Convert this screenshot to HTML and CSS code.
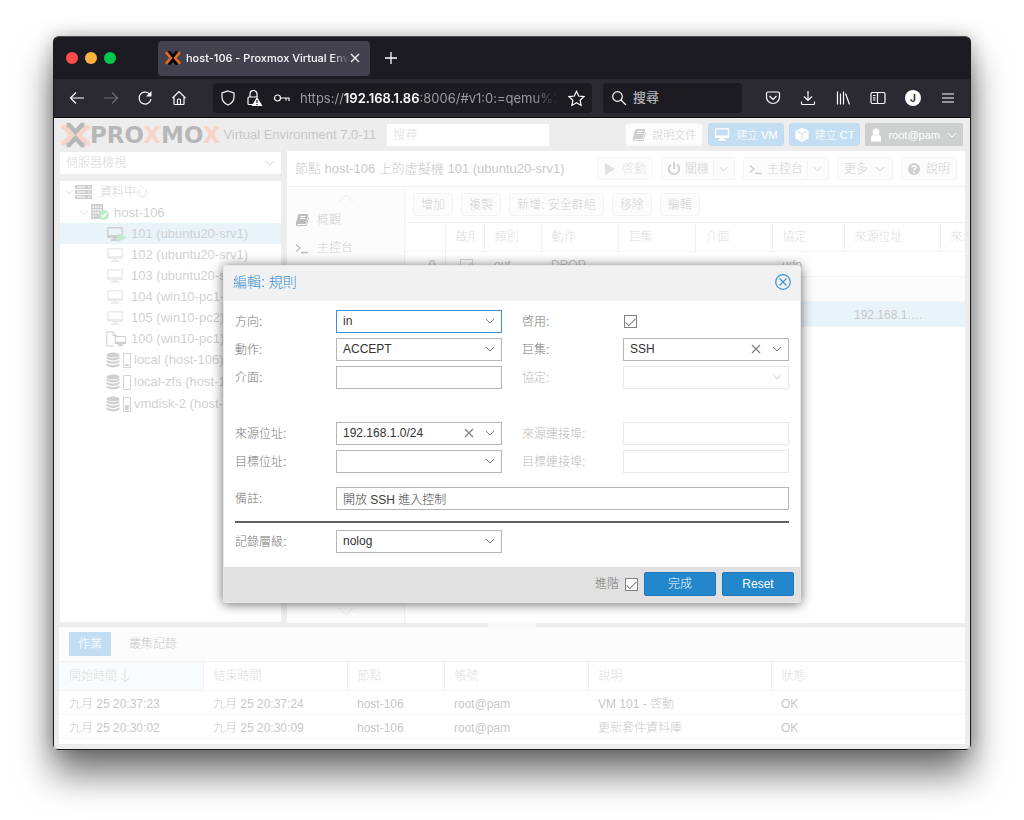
FILE: index.html
```html
<!DOCTYPE html>
<html lang="zh-Hant">

<head>
    <meta charset="UTF-8">
    <meta name="viewport" content="width=device-width, initial-scale=1.0">
    <title>host-106 - Proxmox Virtual Environment</title>
    <link rel="stylesheet" href="styles.css">
</head>

<body>
    <!-- shared icons -->
    <svg class="sprite" aria-hidden="true">
        <symbol id="chevron" viewBox="0 0 12 12"><path d="M2 4l4 4 4-4" fill="none" stroke="currentColor" /></symbol>
        <symbol id="cross" viewBox="0 0 12 12"><path d="M2 2l8 8M10 2l-8 8" fill="none" stroke="currentColor" stroke-width="1.2" /></symbol>
        <symbol id="monitor" viewBox="0 0 18 16"><path fill="currentColor" fill-rule="evenodd" d="M2 1h14q1 0 1 1v9q0 1-1 1h-5v1h2v2H5v-2h2v-1H2q-1 0-1-1V2q0-1 1-1zm.5 1.500v6.500h13V2.500z" /></symbol>
        <symbol id="book" viewBox="0 0 14 14"><path fill="currentColor" d="M4.500 1H12q1.300.2 1 1.500l-2 7.500q-.3 1-1.300 1H3q-1 .2-.8 1H11L13.300 4q.8.5.5 1.500l-2 6.500q-.3 1-1.300 1H2.500Q.3 12.500.8 10.500L3 2.200Q3.400 1 4.500 1z" /><path d="M5.500 3.500h5M5 5.500h5" stroke="#fff" /></symbol>
        <symbol id="terminal" viewBox="0 0 14 14"><path d="M1 3.500l4 3.500-4 3.500M6 11.500h7" fill="none" stroke="currentColor" stroke-width="1.400" /></symbol>
        <symbol id="disk" viewBox="0 0 14 16"><g fill="currentColor"><ellipse cx="7" cy="3" rx="6.500" ry="2.500" /><path d="M.5 4.500q6.500 3.500 13 0v2q-6.500 4-13 0zM.5 8q6.500 3.500 13 0v2q-6.500 4-13 0zM.5 11.500q6.500 3.500 13 0v2q-6.500 4-13 0z" /></g></symbol>
    </svg>

    <div class="window">
        <div class="tabstrip">
            <span class="light red"></span><span class="light yellow"></span><span class="light green"></span>
            <div class="tab">
                <svg width="16" height="14" viewBox="0 0 16 14" fill="none" stroke-width="2.600"><path d="M.5 2h1L6 7l-4.500 5h-1M15.500 2h-1L10 7l4.500 5h1" stroke="#f06a1b" /><path d="M3.500 1h1L8 5.500 11.500 1h1M3.500 13h1L8 8.500l3.500 4.500h1" stroke="#000" /></svg>
                <span class="tab-title">host-106 - Proxmox Virtual Envi</span>
                <button class="tab-close" aria-label="Close tab"><svg width="12" height="12"><use href="#cross" /></svg></button>
            </div>
            <button class="tab-new" aria-label="New tab"><svg width="14" height="14" viewBox="0 0 14 14"><path d="M7 1v12M1 7h12" stroke="currentColor" stroke-width="1.300" /></svg></button>
        </div>

        <div class="navbar">
            <div class="nav-group">
                <button aria-label="Back"><svg width="16" height="16" viewBox="0 0 16 16"><path d="M15 8H2M7 2.500L1.500 8 7 13.500" /></svg></button>
                <button class="dim" aria-label="Forward"><svg width="16" height="16" viewBox="0 0 16 16"><path d="M1 8h13M9 2.500L14.500 8 9 13.500" /></svg></button>
                <button aria-label="Reload"><svg width="16" height="16" viewBox="0 0 16 16"><path d="M14 9a6 6 0 1 1-2-5.500L14 5" /><path d="M14.500 1v5.500H9z" fill="currentColor" stroke="none" /></svg></button>
                <button aria-label="Home"><svg width="16" height="16" viewBox="0 0 16 16"><path d="M1.500 8L8 1.500 14.500 8M3 7v6.500q0 1 1 1h8q1 0 1-1V7M6.500 14v-4q0-1 1-1h1q1 0 1 1v4" /></svg></button>
            </div>
            <div class="urlbar">
                <svg width="16" height="16" viewBox="0 0 16 16"><path d="M8 1l6 2v4q0 5.500-6 8-6-2.500-6-8V3z" /></svg>
                <svg width="17" height="16" viewBox="0 0 17 16"><path d="M4 7V4a3 3 0 0 1 7 0v3M7 14.500H3q-1 0-1-1V8q0-1 1-1h9" /><path d="M11 7l5.500 9h-11z" fill="#fff" stroke="none" /><path d="M11 10v3M11 14v1" stroke="#1c1b22" /></svg>
                <svg width="17" height="16" viewBox="0 0 17 16"><circle cx="4.500" cy="8" r="3" /><path d="M7.500 8H16v3M13 8v2.500" /></svg>
                <span class="url">https://<b>192.168.1.86</b>:8006/#v1:0:=qemu%2</span>
                <svg width="17" height="17" viewBox="0 0 17 17"><path d="M8.500 1.300l2.200 4.700 5.200.6-3.800 3.600 1 5.200-4.600-2.600-4.600 2.600 1-5.200L1.100 6.600 6.300 6z" /></svg>
            </div>
            <div class="searchbar">
                <svg width="16" height="16" viewBox="0 0 16 16"><circle cx="6.500" cy="6.500" r="4.800" /><path d="M10 10l5 5" /></svg>
                <input type="text" placeholder="搜尋" aria-label="搜尋">
            </div>
            <div class="nav-group end">
                <button aria-label="Pocket"><svg width="16" height="16" viewBox="0 0 16 16"><path d="M3 2h10q1.500 0 1.500 1.500V7a6.500 6.500 0 0 1-13 0V3.500Q1.500 2 3 2zM4.500 6L8 9.500 11.500 6" /></svg></button>
                <button aria-label="Downloads"><svg width="16" height="16" viewBox="0 0 16 16"><path d="M8 1v9M4 6.500l4 4 4-4M1.500 11.500v2q0 1 1 1h11q1 0 1-1v-2" /></svg></button>
                <button aria-label="Library"><svg width="16" height="16" viewBox="0 0 16 16"><path d="M2.500 1.500v13M5.500 3.500v11M8.500 1.500v13M10.500 3.500l4 11" /></svg></button>
                <button aria-label="Sidebars"><svg width="16" height="16" viewBox="0 0 16 16"><rect x="1" y="2.500" width="14" height="11" rx="1.500" /><path d="M7.500 2.500v11M3 5.500h2.500M3 7.800h2.500M3 10h2.500" /></svg></button>
                <button aria-label="Account"><span class="avatar">J</span></button>
                <button aria-label="Menu"><svg width="14" height="14" viewBox="0 0 14 14"><path d="M1 3h12M1 7h12M1 11h12" /></svg></button>
            </div>
        </div>

        <div class="page">
            <header class="header">
                <svg width="29" height="26" viewBox="0 0 29 26" fill="none" stroke-width="4.500"><path d="M.5 5H3l8 8-8 8H.5M28.500 5H26l-8 8 8 8h2.500" stroke="#e57045" /><path d="M5.500 3h2.500l6.500 7L21 3h2.500M5.500 23h2.500l6.500-7 6.500 7h2.500" stroke="#101010" /></svg>
                <span class="brand">PRO<i>X</i>MO<i>X</i></span>
                <span class="version">Virtual Environment 7.0-11</span>
                <input class="search" type="text" placeholder="搜尋" aria-label="搜尋">
                <div class="header-buttons">
                    <button class="btn"><svg width="14" height="14"><use href="#book" /></svg>說明文件</button>
                    <button class="btn blue"><svg width="16" height="15"><use href="#monitor" /></svg>建立 VM</button>
                    <button class="btn blue"><svg width="14" height="14" viewBox="0 0 14 14"><path fill="currentColor" d="M7 0l6.500 2.500v8L7 14 .5 10.500v-8z" /><path d="M2 3.500l5 2 5-2M7 6v6.500" fill="none" stroke="#3892d4" /></svg>建立 CT</button>
                    <button class="btn user"><svg width="12" height="14" viewBox="0 0 12 14" fill="currentColor"><circle cx="6" cy="4" r="3.500" /><path d="M1 13.500V10q0-3 2.500-3 2.500 1.500 5 0Q11 7 11 10v3.500z" /></svg>root@pam<svg width="12" height="12"><use href="#chevron" /></svg></button>
                </div>
            </header>

            <div class="main">
                <aside class="resources">
                    <button class="view-select">伺服器檢視<svg width="12" height="12"><use href="#chevron" /></svg></button>
                    <ul class="tree">
                        <li class="level0"><svg class="arrow" width="12" height="12"><use href="#chevron" /></svg><svg width="17" height="14" viewBox="0 0 17 14"><path fill="currentColor" d="M0 0h17v4H0zM0 5h17v4H0zM0 10h17v4H0z" /><path d="M2 2h8M2 7h8M2 12h8M13 2h2M13 7h2M13 12h2" stroke="#fff" /></svg><span>資料中心</span></li>
                        <li class="level1"><svg class="arrow" width="12" height="12"><use href="#chevron" /></svg><svg width="20" height="17" viewBox="0 0 20 17"><path fill="currentColor" d="M1 0h12v15H1z" /><path d="M2.500 3h9M2.500 6h9M2.500 9h9M2.500 12h3" stroke="#fff" stroke-width="1.500" stroke-dasharray="1.500 1" /><circle cx="14" cy="11" r="5" fill="#21bf4b" /><path d="M11.500 11l2 2 3-4" stroke="#fff" stroke-width="1.500" fill="none" /></svg><span>host-106</span></li>
                        <li class="level2 selected"><svg width="21" height="16" viewBox="0 0 21 16"><use href="#monitor" width="18" height="16" /><path d="M12 7l9 4.500-9 4.500z" fill="#21bf4b" /></svg><span>101 (ubuntu20-srv1)</span></li>
                        <li class="level2"><svg class="off" width="18" height="16"><use href="#monitor" /></svg><span>102 (ubuntu20-srv1)</span></li>
                        <li class="level2"><svg class="off" width="18" height="16"><use href="#monitor" /></svg><span>103 (ubuntu20-srv1)</span></li>
                        <li class="level2"><svg class="off" width="18" height="16"><use href="#monitor" /></svg><span>104 (win10-pc1-old)</span></li>
                        <li class="level2"><svg class="off" width="18" height="16"><use href="#monitor" /></svg><span>105 (win10-pc2)</span></li>
                        <li class="level2"><svg width="21" height="16" viewBox="0 0 21 16"><path d="M8 15H.8V.8H7L10.500 4v2M7 1v3.500h3.500" fill="none" stroke="currentColor" /><use href="#monitor" x="8" y="4" width="13" height="12" /></svg><span>100 (win10-pc1)</span></li>
                        <li class="level2 storage"><svg width="14" height="16"><use href="#disk" /></svg><i class="gauge" style="--fill: 2px"></i><span>local (host-106)</span></li>
                        <li class="level2 storage"><svg width="14" height="16"><use href="#disk" /></svg><i class="gauge" style="--fill: 0px"></i><span>local-zfs (host-106)</span></li>
                        <li class="level2 storage"><svg width="14" height="16"><use href="#disk" /></svg><i class="gauge" style="--fill: 5px"></i><span>vmdisk-2 (host-106)</span></li>
                    </ul>
                </aside>

                <section class="content">
                    <div class="content-title">
                        <h1>節點 host-106 上的虛擬機 101 (ubuntu20-srv1)</h1>
                        <div class="title-buttons">
                            <button class="btn" disabled><svg width="12" height="12" viewBox="0 0 12 12"><path d="M1 0l10 6-10 6z" fill="currentColor" /></svg>啓動</button>
                            <button class="btn split"><svg width="14" height="14" viewBox="0 0 14 14"><path d="M4 2.500a5.300 5.300 0 1 0 6 0M7 0v7" fill="none" stroke="currentColor" stroke-width="1.800" /></svg>關機<svg class="more" width="12" height="12"><use href="#chevron" /></svg></button>
                            <button class="btn split"><svg width="14" height="14"><use href="#terminal" /></svg>主控台<svg class="more" width="12" height="12"><use href="#chevron" /></svg></button>
                            <button class="btn">更多<svg width="12" height="12"><use href="#chevron" /></svg></button>
                            <button class="btn"><svg width="12" height="12" viewBox="0 0 12 12"><circle cx="6" cy="6" r="6" fill="currentColor" /><path d="M4 4.500Q4 3 6 3t2 1.500Q8 5.500 6 6.500V7.500M6 8.500V10" fill="none" stroke="#fff" stroke-width="1.500" /></svg>說明</button>
                        </div>
                    </div>
                    <div class="content-body">
                        <nav class="sidenav">
                            <svg class="scroll" width="16" height="9" viewBox="0 0 16 9"><path d="M1 8l7-7 7 7" /></svg>
                            <a href="#"><svg width="14" height="14"><use href="#book" /></svg>概觀</a>
                            <a href="#"><svg width="14" height="14"><use href="#terminal" /></svg>主控台</a>
                            <svg class="scroll bottom" width="16" height="9" viewBox="0 0 16 9"><path d="M1 1l7 7 7-7" /></svg>
                        </nav>
                        <div class="firewall">
                            <div class="toolbar">
                                <button class="btn">增加</button>
                                <button class="btn">複製</button>
                                <button class="btn">新增: 安全群組</button>
                                <button class="btn">移除</button>
                                <button class="btn">編輯</button>
                            </div>
                            <table class="rules">
                                <colgroup>
                                    <col class="w-num"><col class="w-on"><col class="w-type"><col class="w-mid"><col class="w-mid"><col class="w-mid"><col class="w-proto"><col class="w-src"><col>
                                </colgroup>
                                <thead>
                                    <tr><th></th><th><div class="clip">啟用</div></th><th>類別</th><th>動作</th><th>巨集</th><th>介面</th><th>協定</th><th>來源位址</th><th>來源連接埠</th></tr>
                                </thead>
                                <tbody>
                                    <tr><td class="num">0</td><td><input type="checkbox" checked aria-label="啟用"></td><td>out</td><td>DROP</td><td></td><td></td><td>udp</td><td></td><td></td></tr>
                                    <tr class="alt"><td colspan="9"></td></tr>
                                    <tr class="selected"><td></td><td></td><td></td><td></td><td></td><td></td><td></td><td>192.168.1.…</td><td></td></tr>
                                </tbody>
                            </table>
                        </div>
                    </div>
                </section>
            </div>

            <div class="splitter"><span></span></div>

            <section class="logs">
                <div class="log-tabs">
                    <button class="active">作業</button>
                    <button>叢集記錄</button>
                </div>
                <table>
                    <colgroup>
                        <col class="w-time"><col class="w-time"><col class="w-node"><col class="w-time"><col class="w-desc"><col>
                    </colgroup>
                    <thead>
                        <tr>
                            <th class="sorted">開始時間<svg width="10" height="14" viewBox="0 0 10 14"><path d="M5 0v13M1 9l4 4 4-4" fill="none" stroke="currentColor" /></svg></th>
                            <th>結束時間</th><th>節點</th><th>帳號</th><th>說明</th><th>狀態</th>
                        </tr>
                    </thead>
                    <tbody>
                        <tr><td>九月 25 20:37:23</td><td>九月 25 20:37:24</td><td>host-106</td><td>root@pam</td><td>VM 101 - 啓動</td><td>OK</td></tr>
                        <tr><td>九月 25 20:30:02</td><td>九月 25 20:30:09</td><td>host-106</td><td>root@pam</td><td>更新套件資料庫</td><td>OK</td></tr>
                    </tbody>
                </table>
            </section>

            <div class="mask">
                <form class="dialog">
                    <div class="dialog-header">
                        <h2>編輯: 規則</h2>
                        <button type="button" aria-label="Close"><svg width="16" height="16" viewBox="0 0 16 16"><path d="M8 .7a7.300 7.300 0 1 0 0 14.600A7.300 7.300 0 1 0 8 .7zM4.500 4.500l7 7M11.500 4.500l-7 7" fill="none" stroke="currentColor" stroke-width="1.200" /></svg></button>
                    </div>
                    <div class="dialog-body">
                        <div class="fields">
                            <label for="direction">方向:</label>
                            <div class="combo focus"><select id="direction"><option>in</option></select><svg width="12" height="12"><use href="#chevron" /></svg></div>
                            <label for="enable">啓用:</label>
                            <input type="checkbox" id="enable" checked>

                            <label for="action">動作:</label>
                            <div class="combo"><select id="action"><option>ACCEPT</option></select><svg width="12" height="12"><use href="#chevron" /></svg></div>
                            <label for="macro">巨集:</label>
                            <div class="combo"><select id="macro"><option>SSH</option></select><svg width="12" height="12"><use href="#cross" /></svg><svg width="12" height="12"><use href="#chevron" /></svg></div>

                            <label for="iface">介面:</label>
                            <input type="text" id="iface">
                            <label class="off" for="proto">協定:</label>
                            <div class="combo off"><select id="proto" disabled><option></option></select><svg width="12" height="12"><use href="#chevron" /></svg></div>
                        </div>
                        <div class="fields address">
                            <label for="source">來源位址:</label>
                            <div class="combo"><select id="source"><option>192.168.1.0/24</option></select><svg width="12" height="12"><use href="#cross" /></svg><svg width="12" height="12"><use href="#chevron" /></svg></div>
                            <label class="off" for="sport">來源連接埠:</label>
                            <input type="text" id="sport" disabled>

                            <label for="dest">目標位址:</label>
                            <div class="combo"><select id="dest"><option></option></select><svg width="12" height="12"><use href="#chevron" /></svg></div>
                            <label class="off" for="dport">目標連接埠:</label>
                            <input type="text" id="dport" disabled>
                        </div>
                        <div class="fields comment">
                            <label for="comment">備註:</label>
                            <input type="text" id="comment" class="wide" value="開放 SSH 進入控制">
                        </div>
                        <hr>
                        <div class="fields">
                            <label for="loglevel">記錄層級:</label>
                            <div class="combo"><select id="loglevel"><option>nolog</option></select><svg width="12" height="12"><use href="#chevron" /></svg></div>
                        </div>
                    </div>
                    <div class="dialog-footer">
                        <label for="advanced">進階</label>
                        <input type="checkbox" id="advanced" checked>
                        <button type="submit">完成</button>
                        <button type="reset">Reset</button>
                    </div>
                </form>
            </div>
        </div>
    </div>
</body>

</html>
```
FILE: styles.css
```css
* {
    box-sizing: border-box;
}

body {
    margin: 0;
    min-height: 100vh;
    padding: 36px 53px 70px;
    background: #fff;
    color: #404040;
    font: 300 12px/16px "Liberation Sans", "Noto Sans CJK TC", sans-serif;
    display: flex;
    overflow: hidden;
}

button,
input,
select {
    font: inherit;
    color: inherit;
    margin: 0;
}

button {
    display: flex;
    align-items: center;
    justify-content: center;
    padding: 0;
    border: 0;
    background: none;
    white-space: nowrap;
}

svg {
    flex: none;
    display: block;
}

.sprite {
    position: absolute;
    width: 0;
    height: 0;
}

/* browser window */
.window {
    flex: 1;
    min-width: 0;
    display: flex;
    flex-direction: column;
    border: 1px solid #1a1a1a;
    border-top-color: #4c4e4e;
    border-radius: 6px;
    background: #1c1b22;
    box-shadow: 0 24px 36px rgba(0, 0, 0, 0.55), 0 0 18px rgba(0, 0, 0, 0.25);
}

.tabstrip {
    display: flex;
    align-items: center;
    height: 42px;
    padding-left: 12px;
    color: #fbfbfe;
}

.light {
    width: 12px;
    height: 12px;
    margin-right: 7px;
    border-radius: 50%;
}

.red {
    background: #ff4b4b;
}

.yellow {
    background: #ffb23e;
}

.green {
    background: #00ca4e;
}

.tab {
    display: flex;
    align-items: center;
    width: 212px;
    height: 35px;
    margin-left: 35px;
    padding: 0 9px 0 7px;
    border-radius: 4px;
    background: #42414d;
}

.tab-title {
    flex: 1;
    margin-left: 5px;
    overflow: hidden;
    white-space: nowrap;
    font: 500 11px/16px Inter, sans-serif;
    -webkit-mask-image: linear-gradient(90deg, #000 145px, transparent);
    mask-image: linear-gradient(90deg, #000 145px, transparent);
}

.tab-new {
    margin-left: 14px;
}

.navbar {
    display: flex;
    align-items: center;
    height: 39px;
    padding: 0 5px 0 6px;
    border-bottom: 1px solid #0c0c0d;
    background: #2b2a33;
    color: #fbfbfe;
}

.navbar svg {
    fill: none;
    stroke: currentColor;
    stroke-width: 1.2;
}

.nav-group {
    display: flex;
    margin-right: 17px;
}

.nav-group button {
    width: 34px;
    height: 32px;
}

.nav-group.end {
    gap: 1px;
    margin: 0 0 0 14px;
}

.nav-group .dim {
    color: #6d6c75;
}

.urlbar,
.searchbar {
    display: flex;
    align-items: center;
    height: 30px;
    border-radius: 4px;
    background: #1c1b22;
}

.urlbar {
    flex: 1;
    min-width: 0;
    gap: 10px;
    padding: 0 7px;
}

.url {
    flex: 1;
    overflow: hidden;
    white-space: nowrap;
    color: #9b9aa2;
    font: 400 13px/18px Inter, sans-serif;
    -webkit-mask-image: linear-gradient(90deg, #000 90%, transparent);
    mask-image: linear-gradient(90deg, #000 90%, transparent);
}

.url b {
    color: #fbfbfe;
    font-weight: 600;
}

.searchbar {
    width: 139px;
    margin-left: 11px;
    padding: 0 8px;
    gap: 6px;
}

.searchbar input {
    flex: 1;
    min-width: 0;
    border: 0;
    padding: 0;
    background: none;
    font-size: 13px;
    font-weight: 500;
}

.searchbar input::placeholder {
    color: #b5b4bb;
}

.avatar {
    width: 16px;
    height: 16px;
    border-radius: 50%;
    background: #fff;
    color: #2b2a33;
    font: 700 10px/16px Inter, sans-serif;
}

/* proxmox page */
.page {
    position: relative;
    flex: 1;
    display: flex;
    flex-direction: column;
    padding: 0 5px 5px;
    border-radius: 0 0 5px 5px;
    background: #c3c3c3;
}

.header {
    display: flex;
    align-items: center;
    height: 33px;
    padding: 0 2px;
}

.brand {
    font: 700 23px/26px "DejaVu Sans", sans-serif;
    color: #101010;
}

.brand i {
    color: #e57045;
    font-style: normal;
}

.version {
    margin-left: 3px;
    font-size: 13px;
    white-space: nowrap;
}

.search {
    width: 162px;
    height: 22px;
    margin-left: 11px;
    padding: 0 6px;
    border: 0;
    background: #fff;
}

.search::placeholder {
    color: #909090;
}

.header-buttons {
    display: flex;
    gap: 5px;
    margin-left: auto;
    font-size: 11px;
}

.btn {
    height: 23px;
    gap: 6px;
    padding: 0 7px;
    border: 1px solid #d8d8d8;
    border-radius: 3px;
    background: #f5f5f5;
    color: #606060;
}

.header .btn {
    padding: 0 6px;
}

.header .btn.blue {
    border-color: #2c83c4;
    background: #3892d4;
    color: #fff;
    padding: 0 5px;
}

.header .btn.user {
    border-radius: 1px;
    border-color: #5d6363;
    background: #5d6363;
    color: #fff;
    padding: 0 4px;
}

.btn:disabled {
    color: #999;
    border-color: #e4e4e4;
}

.btn .more {
    width: 16px;
    height: 18px;
    padding-left: 4px;
    border-left: 1px solid #d8d8d8;
}

.main {
    flex: 1;
    display: flex;
    gap: 6px;
    min-height: 0;
}

.resources {
    display: flex;
    flex-direction: column;
    gap: 7px;
    width: 222px;
    padding: 1px 0 1px 1px;
}

.view-select {
    justify-content: space-between;
    height: 22px;
    padding: 0 5px 0 6px;
    background: #fff;
    color: #707070;
}

.tree {
    flex: 1;
    margin: 0;
    padding: 0;
    list-style: none;
    overflow: hidden;
    background: #fff;
    font-size: 13px;
}

.tree li {
    display: flex;
    align-items: center;
    height: 21px;
    color: #606060;
    white-space: nowrap;
}

.tree .level0 {
    font-size: 12px;
}

.tree .level0 svg + svg {
    margin-right: 8px;
}

.tree .arrow {
    color: #999;
    margin: 0 0 0 3px;
}

.tree .level1 {
    padding-left: 15px;
}

.tree .level1 span {
    margin-left: 4px;
}

.tree .level2 {
    padding-left: 46px;
}

.tree .level2 svg {
    margin-right: 7px;
}

.tree .level2 svg[width="21"] {
    margin-right: 4px;
}

.tree .level2 .off {
    color: #bbb;
}

.tree .storage {
    height: 22px;
}

.tree .storage svg {
    margin-right: 3px;
}

.gauge {
    width: 8px;
    height: 15px;
    margin-right: 3px;
    padding: 1px;
    border: 1px solid #707070;
    background: linear-gradient(#707070, #707070) center bottom / 4px var(--fill) no-repeat content-box;
}

.tree .selected,
.rules .selected {
    background: #b5d8ee;
}

.content {
    flex: 1;
    min-width: 0;
    display: flex;
    flex-direction: column;
    background: #fff;
}

.content-title {
    display: flex;
    align-items: center;
    justify-content: space-between;
    height: 36px;
    padding: 0 8px;
    border-bottom: 1px solid #d0d0d0;
}

h1,
h2 {
    margin: 0;
    font-size: 13px;
    font-weight: 300;
    white-space: nowrap;
}

.title-buttons,
.toolbar {
    display: flex;
    gap: 8px;
}

.title-buttons .btn {
    padding: 0 6px;
}

.title-buttons .split {
    gap: 4px;
    padding: 0 5px;
}

.content-body {
    flex: 1;
    display: flex;
}

.sidenav {
    display: flex;
    flex-direction: column;
    width: 118px;
    padding: 7px 8px;
    border-right: 1px solid #d0d0d0;
    background: #f5f5f5;
}

.sidenav a {
    display: flex;
    align-items: center;
    gap: 8px;
    height: 28px;
    color: #606060;
    text-decoration: none;
}

.sidenav a svg {
    color: #222;
}

.scroll {
    align-self: center;
    margin-bottom: 3px;
    fill: none;
    stroke: #bbb;
}

.scroll.bottom {
    margin: auto 0 0;
}

.firewall {
    flex: 1;
    min-width: 0;
}

.toolbar {
    height: 35px;
    align-items: center;
    padding: 0 8px;
}

table {
    width: 100%;
    table-layout: fixed;
    border-collapse: collapse;
}

th,
td {
    height: 24px;
    padding: 2px 9px 0;
    border-bottom: 1px solid #ddd;
    text-align: left;
    font-weight: 300;
    white-space: nowrap;
    overflow: hidden;
}

th {
    height: 29px;
    padding-top: 0;
    border-top: 1px solid #d0d0d0;
    border-left: 1px solid #d0d0d0;
    color: #888;
}

th:first-child {
    border-left: 0;
}

.rules th,
.rules td {
    padding-left: 10px;
}

.rules td {
    height: 25px;
}

.rules .num {
    text-align: right;
    border-right: 1px solid #d0d0d0;
}

.rules input {
    display: block;
    margin-left: 4px;
}

.clip {
    width: 18px;
    overflow: hidden;
}

.alt {
    background: #f5f5f5;
}

.w-num {
    width: 40px;
}

.w-on {
    width: 39px;
}

.w-type {
    width: 57px;
}

.w-mid {
    width: 77px;
}

.w-proto {
    width: 72px;
}

.w-src {
    width: 96px;
}

.splitter {
    height: 4px;
}

.splitter span {
    display: block;
    width: 48px;
    height: 4px;
    margin: 0 auto;
    background: #e8e8e8;
}

.logs {
    height: 117px;
    background: #fff;
    overflow: hidden;
}

.log-tabs {
    display: flex;
    gap: 18px;
    height: 34px;
    padding: 5px 10px;
    background: #f5f5f5;
}

.log-tabs button {
    height: 24px;
    padding: 0;
}

.log-tabs .active {
    padding: 0 9px;
    border-radius: 1px;
    background: #3892d4;
    color: #fff;
}

.logs th,
.logs td {
    padding-left: 10px;
}

.sorted {
    background: #ebf6fe;
}

.sorted svg {
    display: inline-block;
    margin-left: 3px;
    vertical-align: -3px;
}

.w-time {
    width: 144px;
}

.w-node {
    width: 97px;
}

.w-desc {
    width: 183px;
}

/* dialog */
.mask {
    position: absolute;
    inset: 0;
    display: flex;
    align-items: center;
    justify-content: center;
    overflow: hidden;
    background: rgba(255, 255, 255, 0.7);
}

.dialog {
    width: 578px;
    border: 1px solid #e8e8e8;
    border-radius: 3px;
    background: #fff;
    box-shadow: 0 1px 12px rgba(0, 0, 0, 0.6);
}

.dialog-header {
    display: flex;
    align-items: center;
    justify-content: space-between;
    height: 35px;
    padding: 0 9px 2px;
    background: #f1f1f1;
    color: #3892d4;
}

h2 {
    font-size: 14px;
}

.dialog-body {
    padding: 9px 11px 14px;
}

.fields {
    display: grid;
    grid-template-columns: 101px 1fr 121px 1fr;
    row-gap: 5px;
    align-items: center;
}

.fields > label {
    padding-top: 2px;
}

.fields > label:nth-of-type(even) {
    padding-left: 20px;
}

.fields.address {
    margin-top: 33px;
}

.fields.comment {
    margin-top: 14px;
}

label {
    color: #777;
}

label.off {
    color: #bbb;
}

.fields input[type="text"],
.combo {
    width: 100%;
    height: 23px;
    border: 1px solid #b5b5b5;
    background: #fff;
}

.fields input[type="text"] {
    padding: 0 6px;
}

.fields input.wide {
    grid-column: 2 / 5;
}

.fields input:disabled,
.combo.off {
    border-color: #e8e8e8;
}

.combo {
    display: flex;
    align-items: center;
    padding-right: 5px;
    gap: 9px;
    color: #808080;
}

.combo.focus {
    border-color: #3892d4;
}

.combo.off {
    color: #ccc;
}

.combo select {
    flex: 1;
    min-width: 0;
    height: 21px;
    padding: 0 6px;
    border: 0;
    background: none;
    color: #333;
    appearance: none;
}

input[type="checkbox"] {
    display: grid;
    place-items: center;
    width: 13px;
    height: 13px;
    border: 1px solid #808080;
    background: #fff;
    appearance: none;
}

input[type="checkbox"]:checked::after {
    content: "";
    width: 4px;
    height: 9px;
    margin-bottom: 2px;
    border: solid #808080;
    border-width: 0 1px 1px 0;
    transform: rotate(45deg);
}

.fields input[type="checkbox"] {
    margin-left: 1px;
}

hr {
    height: 2px;
    margin: 11px 0 7px;
    border: 0;
    background: #606060;
}

.dialog-footer {
    display: flex;
    align-items: center;
    justify-content: flex-end;
    gap: 6px;
    height: 35px;
    padding: 0 6px;
    background: #e1e1e1;
}

.dialog-footer button {
    width: 72px;
    height: 24px;
    border: 1px solid #1a78ba;
    border-radius: 2px;
    background: #2387cb;
    color: #fff;
}
```
